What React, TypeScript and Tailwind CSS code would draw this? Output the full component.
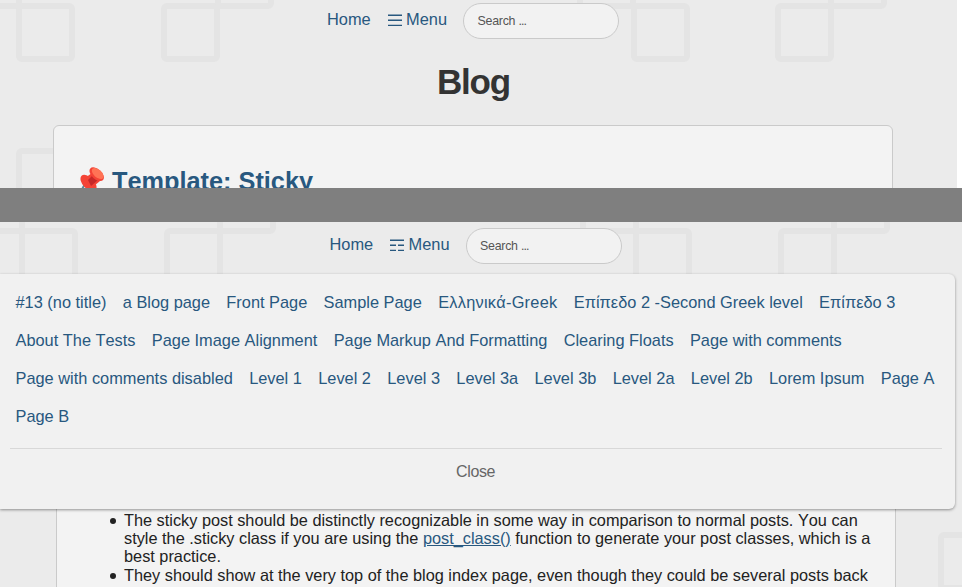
import React from "react";

const ROWS: string[][] = [
  ["#13 (no title)", "a Blog page", "Front Page", "Sample Page", "Ελληνικά-Greek", "Επίπεδο 2 -Second Greek level", "Επίπεδο 3"],
  ["About The Tests", "Page Image Alignment", "Page Markup And Formatting", "Clearing Floats", "Page with comments"],
  ["Page with comments disabled", "Level 1", "Level 2", "Level 3", "Level 3a", "Level 3b", "Level 2a", "Level 2b", "Lorem Ipsum", "Page A"],
  ["Page B"],
];

/** Outlined rounded squares of the page background. */
function Squares({ points, height }: { points: number[][]; height: number }) {
  return (
    <svg className="col-start-1 row-start-1" width="962" height={height} fill="none" stroke="#e4e4e4" strokeWidth="6">
      {points.map(([x, y]) => (
        <rect key={`${x},${y}`} x={x + 3} y={y + 3} width="53" height="53" rx="3" />
      ))}
    </svg>
  );
}

function TopNav({ open }: { open: boolean }) {
  return (
    <nav className="flex h-9 items-start text-[16.4px] leading-[18px] text-[#28587f]">
      <a className="mt-[7px] w-[60.5px] whitespace-nowrap">Home</a>
      <a className="mt-[7px] flex w-[75.5px] items-start whitespace-nowrap">
        <svg className="mt-[4px] mr-[4.5px] shrink-0" width="14" height="13" stroke="#28587f" strokeWidth="1.4">
          {open ? (
            <path d="M0 1.2H14M0 6.3H6M8 6.3H14M0 11.4H6M8 11.4H14" />
          ) : (
            <path d="M0 1.2H14M0 6.3H14M0 11.4H14" />
          )}
        </svg>
        Menu
      </a>
      <div className="flex h-9 w-[156px] items-center rounded-full border border-[#cacaca] bg-[#f2f2f2] pl-[13.5px] text-[12.4px] tracking-[-0.25px] whitespace-pre text-[#555]">
        Search <span className="tracking-[-0.9px]">...</span>
      </div>
    </nav>
  );
}

function Bullet() {
  return <span className="mt-[7px] mr-[8.5px] size-[6px] shrink-0 rounded-full bg-[#222]" />;
}

export default function App() {
  return (
    <div className="h-[587px] w-[962px] overflow-hidden bg-[#ebebeb] font-['Liberation_Sans',Arial,sans-serif] [font-kerning:none]">
      <section className="grid h-[188px] grid-cols-[962px] grid-rows-[188px] overflow-hidden">
        <Squares
          height={188}
          points={[[16, 3], [161, 3], [631, 3], [775, 3], [-37, -50], [215, -50], [577, -50], [828, -50], [16, 148]]}
        />
        <div className="col-start-1 row-start-1 flex">
          <div className="flex w-[957px] flex-col">
            <div className="mt-[3px] pl-[327px]">
              <TopNav open={false} />
            </div>
            <h1 className="mt-[23px] pl-[437px] text-[35px] leading-[40px] font-bold tracking-[-1.2px] text-[#333]">Blog</h1>
            <article className="mt-[23px] ml-[53px] h-[100px] w-[840px] shrink-0 rounded-[6px] border border-[#cacaca] bg-[#f3f3f3] pt-[40px] pl-[25px]">
              <h2 className="flex text-[25.3px] leading-[30px] font-bold text-[#28587f]">
                <svg className="mt-px mr-[6px] shrink-0" width="27" height="27" viewBox="0 0 27 27">
                  <path d="M6 17 2 24" stroke="#5b8b9b" strokeWidth="2" />
                  <ellipse cx="9.5" cy="16" rx="10" ry="5.6" transform="rotate(46 9.5 16)" fill="#f44336" />
                  <path d="M6 11 13 6 21 14 15 19Z" fill="#f44336" />
                  <path d="M9 13 14 8 19 13 12 19Z" fill="#c62828" />
                  <ellipse cx="17.7" cy="7.2" rx="8.6" ry="5" transform="rotate(42 17.7 7.2)" fill="#f44336" />
                  <ellipse cx="18.7" cy="6.5" rx="7" ry="3.9" transform="rotate(42 18.7 6.5)" fill="#ff7355" />
                </svg>
                Template: Sticky
              </h2>
            </article>
          </div>
          <div className="w-[5px] bg-white" />
        </div>
      </section>

      <div className="h-[34px] bg-[#7f7f7f]" />

      <section className="grid h-[365px] grid-cols-[962px] grid-rows-[365px] overflow-hidden">
        <Squares
          height={365}
          points={[[19, 6], [164, 6], [633, 6], [778, 6], [-34, -47], [217, -47], [580, -47], [831, -47], [938, 310]]}
        />
        <div className="col-start-1 row-start-1 flex flex-col">
          <div className="mt-[6px] pl-[329.5px]">
            <TopNav open />
          </div>
          <div className="z-10 mt-[10px] h-[235px] w-[955px] shrink-0 rounded-r-[6px] bg-[#f1f1f1] pt-[19px] shadow-[0_1px_3px_rgba(0,0,0,0.4)]">
            {ROWS.map((row) => (
              <ul key={row[0]} className="ml-[15.5px] flex h-[38px] gap-[16.3px] text-[16.36px] leading-[18px] whitespace-nowrap text-[#28587f]">
                {row.map((item) => (
                  <li key={item} className={item.startsWith("Ελλ") ? "tracking-[0.25px]" : undefined}>
                    {item}
                  </li>
                ))}
              </ul>
            ))}
            <div className="mt-[3px] ml-[10px] w-[932px] border-t border-[#d8d8d8] pt-[14px] pl-[446px] text-[16px] leading-[18px] tracking-[-0.35px] text-[#666]">
              Close
            </div>
          </div>
          <article className="ml-[56px] h-[90px] w-[840px] shrink-0 border-x border-[#cacaca] bg-[#f3f3f3] pt-[2px] pl-[52.5px] text-[16.31px] leading-[18px] whitespace-nowrap text-[#222]">
            <ul>
              <li className="mb-px flex">
                <Bullet />
                <p>
                  The sticky post should be distinctly recognizable in some way in comparison to normal posts. You can
                  <br />
                  style the .sticky class if you are using the <a className="text-[#28587f] underline">post_class()</a> function to generate your post classes, which is a
                  <br />
                  best practice.
                </p>
              </li>
              <li className="flex">
                <Bullet />
                <p>They should show at the very top of the blog index page, even though they could be several posts back</p>
              </li>
            </ul>
          </article>
        </div>
      </section>
    </div>
  );
}
